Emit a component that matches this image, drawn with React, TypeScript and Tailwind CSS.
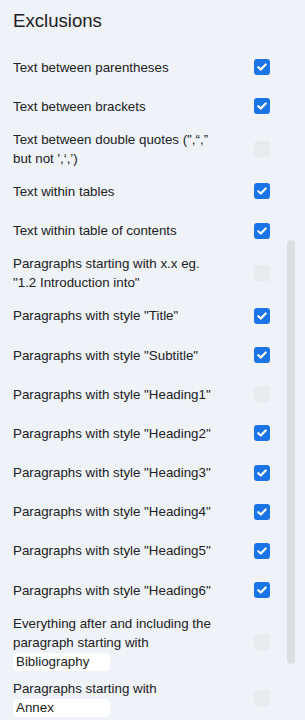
import React, { useState } from 'react';

interface Exclusion {
  id: number;
  label: string;
  checked: boolean;
  input?: string;
}

const initialItems: Exclusion[] = [
  { id: 1, label: 'Text between parentheses', checked: true },
  { id: 2, label: 'Text between brackets', checked: true },
  { id: 3, label: 'Text between double quotes (",\u201C,\u201D but not \',\u2018,\u2019)', checked: false },
  { id: 4, label: 'Text within tables', checked: true },
  { id: 5, label: 'Text within table of contents', checked: true },
  { id: 6, label: 'Paragraphs starting with x.x eg. "1.2 Introduction into"', checked: false },
  { id: 7, label: 'Paragraphs with style "Title"', checked: true },
  { id: 8, label: 'Paragraphs with style "Subtitle"', checked: true },
  { id: 9, label: 'Paragraphs with style "Heading1"', checked: false },
  { id: 10, label: 'Paragraphs with style "Heading2"', checked: true },
  { id: 11, label: 'Paragraphs with style "Heading3"', checked: true },
  { id: 12, label: 'Paragraphs with style "Heading4"', checked: true },
  { id: 13, label: 'Paragraphs with style "Heading5"', checked: true },
  { id: 14, label: 'Paragraphs with style "Heading6"', checked: true },
  { id: 15, label: 'Everything after and including the paragraph starting with', checked: false, input: 'Bibliography' },
  { id: 16, label: 'Paragraphs starting with', checked: false, input: 'Annex' },
];

const Checkbox: React.FC<{ checked: boolean; onChange: () => void }> = ({ checked, onChange }) => (
  <button
    onClick={onChange}
    className={`w-4 h-4 rounded-[3px] flex items-center justify-center flex-shrink-0 ${
      checked ? 'bg-[#1b74e6]' : 'bg-[#e9eaec]'
    }`}
  >
    {checked && (
      <svg width="10" height="8" viewBox="0 0 10 8" fill="none">
        <path d="M1.3 4.2 L3.8 6.5 L8.7 1.5" stroke="white" strokeWidth="2.2" strokeLinecap="round" strokeLinejoin="round" />
      </svg>
    )}
  </button>
);

export default function App() {
  const [items, setItems] = useState<Exclusion[]>(initialItems);

  const toggle = (id: number) => {
    setItems(items.map((it) => (it.id === id ? { ...it, checked: !it.checked } : it)));
  };

  return (
    <div className="w-[305px] h-[720px] overflow-hidden bg-[#eff2f7] text-[#202124] font-['Liberation_Sans',Arial,sans-serif] relative">
      <h2 className="pt-[9px] pl-[13px] text-[18.6px] leading-[24px] font-normal">Exclusions</h2>

      <div className="mt-[14.5px]">
        {items.map((item) => (
          <div key={item.id} className="flex items-center justify-between min-h-[39.2px] py-1 pl-[13px] pr-[35px]">
            <div className="w-[208px] text-[13.33px] leading-[19px]">
              <div>{item.label}</div>
              {item.input !== undefined && (
                <input
                  defaultValue={item.input}
                  className="block w-[97px] h-[18px] mt-px bg-white rounded-[4px] px-[3px] text-[13.33px] leading-[18px] outline-none"
                />
              )}
            </div>
            <Checkbox checked={item.checked} onChange={() => toggle(item.id)} />
          </div>
        ))}
      </div>

      {/* scrollbar thumb */}
      <div className="absolute left-[287px] top-[240px] w-2 h-[424px] rounded-full bg-[#dcdde1]" />
    </div>
  );
}
